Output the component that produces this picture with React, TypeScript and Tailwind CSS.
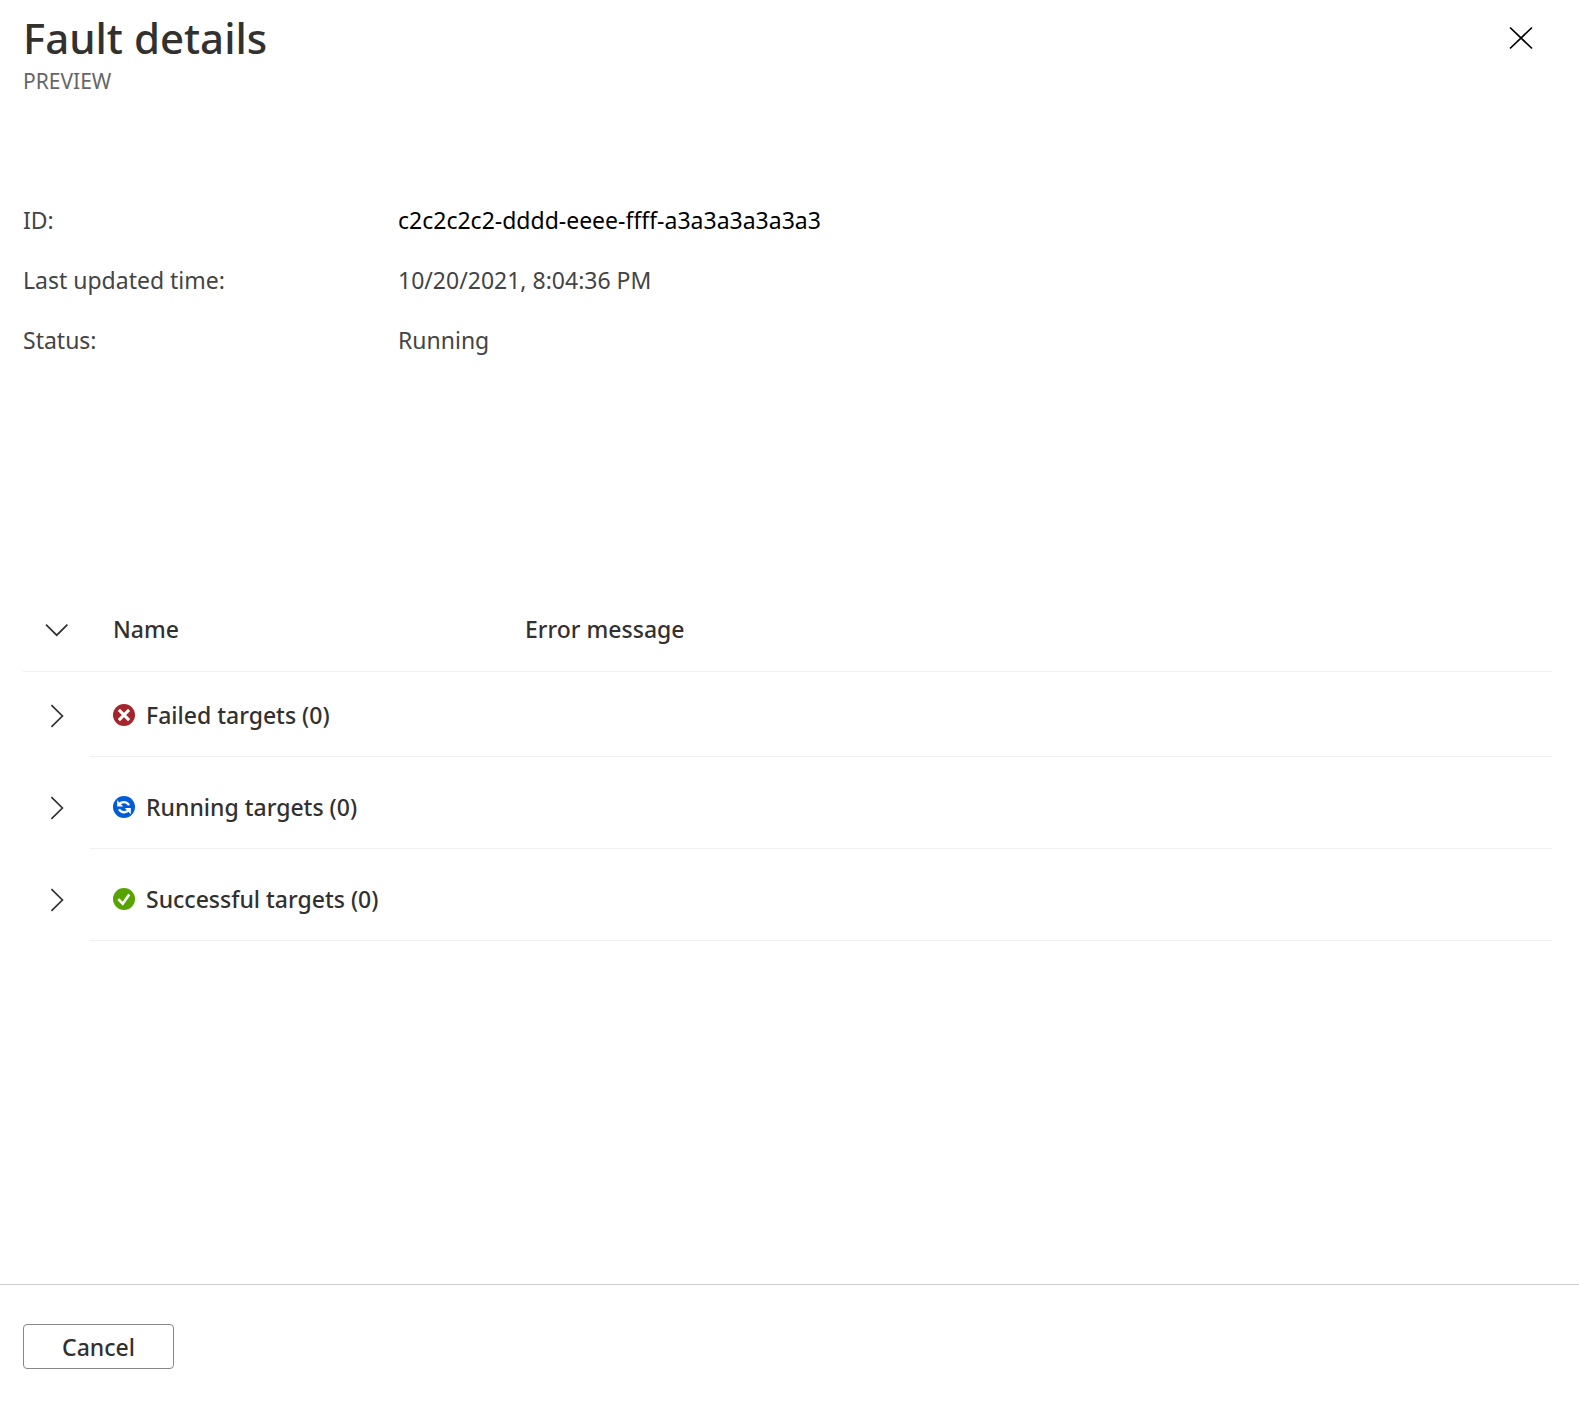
import React, { useState } from "react";

interface TargetGroup {
  id: string;
  label: string;
  count: number;
  icon: React.ReactNode;
}

const FailedIcon = () => (
  <svg width="22" height="22" viewBox="0 0 22 22" aria-hidden="true">
    <circle cx="11" cy="11" r="11" fill="#a4262c" />
    <path d="M5.9 5.9l10.2 10.2M16.1 5.9L5.9 16.1" stroke="#fff" strokeWidth="2.9" />
  </svg>
);

const RunningIcon = () => (
  <svg width="22" height="22" viewBox="0 0 22 22" aria-hidden="true">
    <circle cx="11" cy="11" r="11" fill="#015cda" />
    <path
      d="M6.2 8.6C7.8 5.6 13.6 4.9 16 9.2M15.8 13.8C14.2 16.8 8.4 17.5 6 13.2"
      fill="none"
      stroke="#fff"
      strokeWidth="2.3"
    />
    <path d="M4.2 4.3v6.2h6zM17.8 18.2v-6.1h-6z" fill="#fff" />
  </svg>
);

const SuccessIcon = () => (
  <svg width="22" height="22" viewBox="0 0 22 22" aria-hidden="true">
    <circle cx="11" cy="11" r="11" fill="#57a300" />
    <path d="M5.3 11.1l4.4 4.6 6.6-9.2" fill="none" stroke="#fff" strokeWidth="2.7" />
  </svg>
);

const Chevron = ({ open }: { open: boolean }) => (
  <svg
    width="24"
    height="24"
    viewBox="0 0 24 24"
    fill="none"
    stroke="#323130"
    strokeWidth="1.7"
    aria-hidden="true"
  >
    <path d={open ? "M1 6.7L11.7 17.2 22.4 6.7" : "M6.4 1.2L17.4 12 6.4 22.8"} />
  </svg>
);

const details = [
  {
    label: "ID:",
    value: "c2c2c2c2-dddd-eeee-ffff-a3a3a3a3a3a3",
    valueStyles: "text-black",
  },
  {
    label: "Last updated time:",
    value: "10/20/2021, 8:04:36 PM",
    valueStyles: "text-[#444444]",
  },
  { label: "Status:", value: "Running", valueStyles: "text-[#444444]" },
];

const groups: TargetGroup[] = [
  { id: "failed", label: "Failed targets", count: 0, icon: <FailedIcon /> },
  { id: "running", label: "Running targets", count: 0, icon: <RunningIcon /> },
  {
    id: "success",
    label: "Successful targets",
    count: 0,
    icon: <SuccessIcon />,
  },
];

const App: React.FC = () => {
  const [allOpen, setAllOpen] = useState(true);
  const [openGroups, setOpenGroups] = useState<string[]>([]);

  const toggleGroup = (id: string) => {
    setOpenGroups((prev) =>
      prev.includes(id) ? prev.filter((g) => g !== id) : [...prev, id]
    );
  };

  return (
    <div className="flex min-h-screen flex-col bg-white font-['Noto_Sans','Open_Sans',sans-serif] text-[23px] leading-8 text-[#323130]">
      <header className="flex items-start justify-between pt-2 pr-9 pl-[23px]">
        <div>
          <h1 className="text-[42px] leading-[59px] font-medium">
            Fault details
          </h1>
          <p className="text-[21px] leading-7 text-[#666666]">PREVIEW</p>
        </div>
        <button
          type="button"
          aria-label="Close"
          className="mt-2 flex size-11 items-center justify-center"
        >
          <svg
            width="24"
            height="24"
            viewBox="0 0 24 24"
            stroke="#000"
            strokeWidth="1.7"
            aria-hidden="true"
          >
            <path d="M1 1.5l22 21M23 1.5l-22 21" />
          </svg>
        </button>
      </header>

      <main className="flex-1 pr-[27px] pl-[23px]">
        <dl className="mt-[109px] flex flex-col gap-7">
          {details.map((item) => (
            <div key={item.label} className="flex">
              <dt className="w-[375px] shrink-0 text-[#444444]">
                {item.label}
              </dt>
              <dd className={item.valueStyles}>{item.value}</dd>
            </div>
          ))}
        </dl>

        <table className="mt-[232px] w-full table-fixed border-separate border-spacing-0 text-left">
          <colgroup>
            <col className="w-[67px]" />
            <col className="w-[412px]" />
            <col />
          </colgroup>
          <thead>
            <tr className="h-[84px]">
              <th className="border-b border-[#f0f0f0] p-0">
                <button
                  type="button"
                  aria-label="Toggle all groups"
                  onClick={() => setAllOpen(!allOpen)}
                  className="flex h-8 w-full items-center justify-center"
                >
                  <Chevron open={allOpen} />
                </button>
              </th>
              <th className="border-b border-[#f0f0f0] p-0 pb-0.5 pl-[23px] font-medium">
                Name
              </th>
              <th className="border-b border-[#f0f0f0] p-0 pb-0.5 pl-[23px] font-medium">
                Error message
              </th>
            </tr>
          </thead>
          <tbody>
            {groups.map((group) => (
              <tr key={group.id} className="h-[92px] first:h-[85px]">
                <td className="p-0 pb-[25px] align-bottom">
                  <button
                    type="button"
                    aria-label={`Expand ${group.label}`}
                    aria-expanded={openGroups.includes(group.id)}
                    onClick={() => toggleGroup(group.id)}
                    className="flex h-8 w-full items-center justify-center"
                  >
                    <Chevron open={openGroups.includes(group.id)} />
                  </button>
                </td>
                <td className="border-b border-[#f0f0f0] p-0 pb-[25px] pl-[23px] align-bottom font-medium">
                  <div className="flex items-center gap-[11px]">
                    {group.icon}
                    <span>
                      {group.label} ({group.count})
                    </span>
                  </div>
                </td>
                <td className="border-b border-[#f0f0f0] p-0" />
              </tr>
            ))}
          </tbody>
        </table>
      </main>

      <footer className="border-t border-[#cccccc] px-[23px] pt-[39px] pb-8">
        <button
          type="button"
          className="flex h-[45px] w-[151px] items-center justify-center rounded-[4px] border border-[#8a8886] font-medium"
        >
          Cancel
        </button>
      </footer>
    </div>
  );
};

export default App;
